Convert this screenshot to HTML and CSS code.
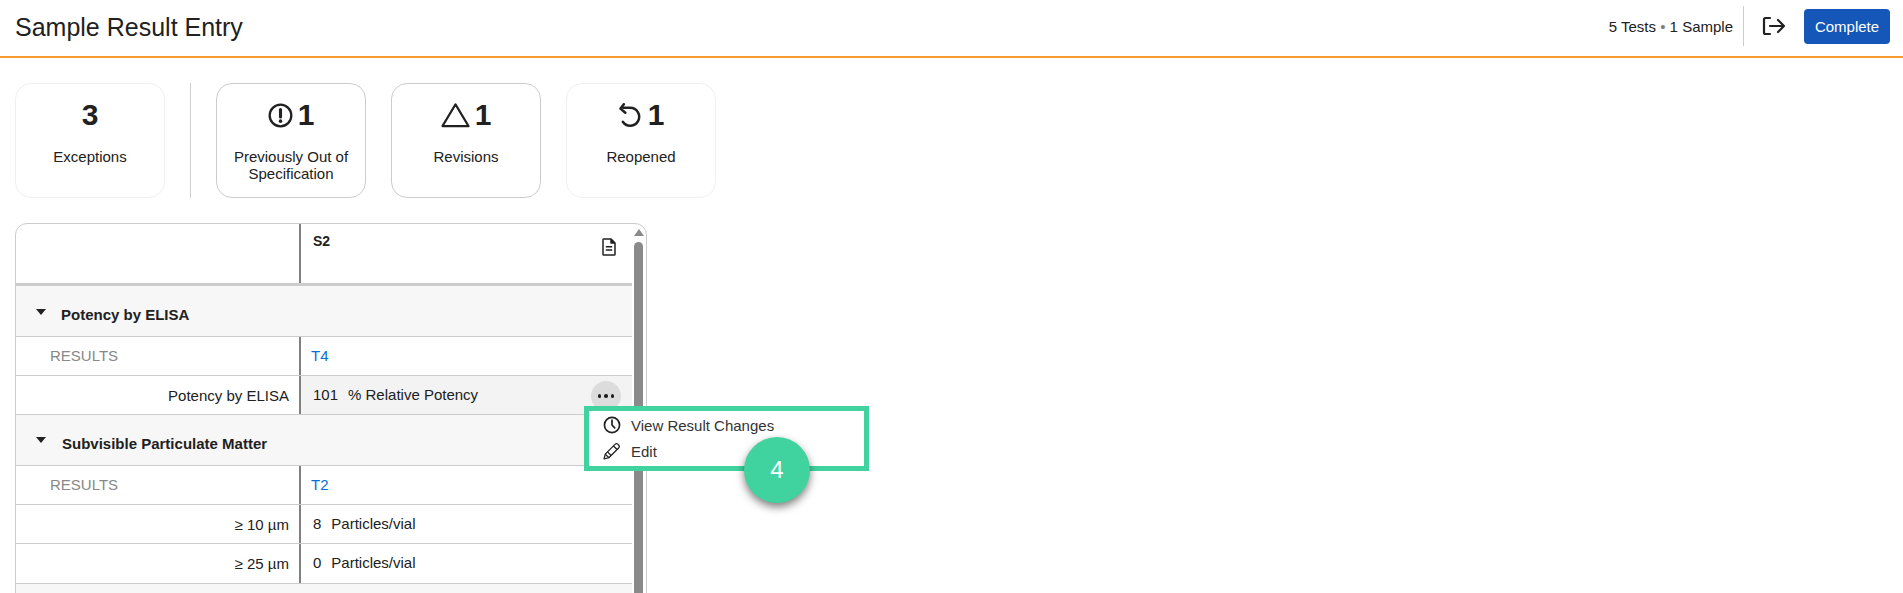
FILE: index.html
```html
<!DOCTYPE html>
<html lang="en">
<head>
<meta charset="utf-8">
<title>Sample Result Entry</title>
<link rel="stylesheet" href="styles.css">
</head>
<body>
<header class="topbar">
  <h1 class="title">Sample Result Entry</h1>
  <div class="top-actions">
    <span class="counts">5 Tests <span class="dot">•</span> 1 Sample</span>
    <span class="top-divider"></span>
    <svg class="exit-icon" viewBox="0 0 24 20" fill="none" stroke="#212121" stroke-width="2.2" stroke-linecap="round" stroke-linejoin="round"><path d="M8 2H3.5A1.5 1.5 0 0 0 2 3.5v13A1.5 1.5 0 0 0 3.5 18H8"/><path d="M8 10h14M16 4l6 6-6 6"/></svg>
    <button class="complete">Complete</button>
  </div>
</header>

<section class="summary">
  <div class="card card-faint">
    <div class="stat"><span>3</span></div>
    <div class="label">Exceptions</div>
  </div>
  <div class="vrule"></div>
  <div class="card">
    <div class="stat">
      <svg class="stat-icon" viewBox="0 0 24 24" fill="none" stroke="#212121" stroke-width="2.2"><circle cx="12" cy="12" r="10.4"/><path d="M12 6.2v7.2" stroke-width="3" stroke-linecap="round"/><circle cx="12" cy="17.4" r="1.7" fill="#212121" stroke="none"/></svg>
      <span>1</span>
    </div>
    <div class="label">Previously Out of Specification</div>
  </div>
  <div class="card">
    <div class="stat">
      <svg class="stat-icon tri" viewBox="0 0 30 26" fill="none" stroke="#212121" stroke-width="2.2" stroke-linejoin="round"><path d="M15 2 28.5 24.5h-27z"/></svg>
      <span>1</span>
    </div>
    <div class="label">Revisions</div>
  </div>
  <div class="card card-faint">
    <div class="stat">
      <svg class="stat-icon" viewBox="0 0 24 24" fill="none" stroke="#212121" stroke-width="2.4" stroke-linecap="round" stroke-linejoin="round"><path d="M5 4.6h6.6a8.6 8.6 0 1 1-7 13.4"/><path d="M5.6 1.2 2.4 5.4l4.6 4"/></svg>
      <span>1</span>
    </div>
    <div class="label">Reopened</div>
  </div>
</section>

<section class="table">
  <div class="rows">
    <div class="row row-head">
      <div class="cell-left"></div>
      <div class="cell-right head-cell">
        <strong>S2</strong>
        <svg class="doc-icon" viewBox="0 0 14 18" fill="none" stroke="#212121" stroke-width="1.5" stroke-linejoin="round"><path d="M1.5 1h7.6L13 5v11.2a.8.8 0 0 1-.8.8H1.8a.8.8 0 0 1-.8-.8V1.5z"/><path d="M9 1v4h4" fill="#212121"/><path d="M3.8 8.8h6.4M3.8 12h6.4"/></svg>
      </div>
    </div>

    <div class="group group-a"><span class="caret"></span><span>Potency by ELISA</span></div>
    <div class="row row-results">
      <div class="cell-left results">RESULTS</div>
      <div class="cell-right link">T4</div>
    </div>
    <div class="row row-value">
      <div class="cell-left name">Potency by ELISA</div>
      <div class="cell-right value shaded"><span class="num">101</span><span>% Relative Potency</span>
        <span class="more"><i></i><i></i><i></i></span>
      </div>
    </div>

    <div class="group group-b"><span class="caret"></span><span>Subvisible Particulate Matter</span></div>
    <div class="row row-results">
      <div class="cell-left results">RESULTS</div>
      <div class="cell-right link">T2</div>
    </div>
    <div class="row row-value">
      <div class="cell-left name">≥ 10 µm</div>
      <div class="cell-right value"><span class="num">8</span><span>Particles/vial</span></div>
    </div>
    <div class="row row-value row-last">
      <div class="cell-left name">≥ 25 µm</div>
      <div class="cell-right value"><span class="num">0</span><span>Particles/vial</span></div>
    </div>
    <div class="group group-rest"></div>
  </div>
  <div class="scrollbar">
    <span class="arrow"></span>
    <span class="thumb"></span>
  </div>
</section>

<div class="menu">
  <div class="menu-item">
    <svg class="menu-icon" viewBox="0 0 20 20" fill="none" stroke="#212121" stroke-width="1.9" stroke-linecap="round" stroke-linejoin="round"><circle cx="10" cy="10" r="8.4"/><path d="M10 4.6V10l3 3.2"/></svg>
    <span>View Result Changes</span>
  </div>
  <div class="menu-item">
    <svg class="menu-icon" viewBox="0 0 20 20" fill="none" stroke="#212121" stroke-width="1.4" stroke-linejoin="round"><path d="M1.2 18.8l1.3-5.3L13.6 2.4a2 2 0 0 1 2.8 0l1.2 1.2a2 2 0 0 1 0 2.8L6.5 17.5z"/><path d="M11.6 4.4l4 4M2.5 13.5l4 4M5 11l4 4"/></svg>
    <span>Edit</span>
  </div>
</div>
<div class="callout">4</div>
</body>
</html>
```
FILE: styles.css
```css
* { box-sizing: border-box; }
html, body { height: 100%; overflow: hidden; }
body {
  margin: 0;
  background: #fff;
  color: #212121;
  font-family: "Liberation Sans", Arial, sans-serif;
  font-size: 15px;
  position: relative;
}
.topbar {
  height: 58px;
  border-bottom: 2px solid #f79a2e;
  display: flex;
  align-items: center;
  justify-content: space-between;
  padding: 0 13px 0 15px;
}
.title { margin: 0 0 2px; font-size: 25px; font-weight: 400; }
.top-actions { display: flex; align-items: center; margin-bottom: 4px; }
.counts { font-size: 15px; }
.dot { color: #808080; }
.top-divider { width: 1px; height: 40px; background: #ccc; margin: 0 18px 0 10px; }
.exit-icon { width: 24px; height: 20px; margin-right: 18px; }
.complete {
  width: 86px; height: 35px;
  background: #1557b8; color: #fff;
  border: 0; border-radius: 4px;
  font: 15px "Liberation Sans", Arial, sans-serif;
  padding: 0;
}
.summary {
  display: flex;
  height: 115px;
  margin: 25px 0 0 15px;
}
.card {
  width: 150px;
  margin-right: 25px;
  border: 1px solid #ccc;
  border-radius: 16px;
  text-align: center;
  padding-top: 14px;
}
.card-faint { border-color: #f0f0f0; }
.vrule { width: 1px; background: #ccc; margin-right: 25px; }
.stat {
  height: 34px;
  display: flex;
  align-items: center;
  justify-content: center;
  gap: 5px;
  font-size: 30px;
  font-weight: 700;
  line-height: 34px;
}
.stat-icon { width: 25px; height: 25px; }
.stat-icon.tri { width: 29px; height: 26px; }
.label {
  margin: 16px auto 0;
  width: 130px;
  font-size: 15px;
  line-height: 17px;
}
.table {
  position: relative;
  display: flex;
  width: 632px;
  height: 480px;
  margin: 25px 0 0 15px;
  border: 1px solid #ccc;
  border-radius: 12px;
  overflow: hidden;
}
.rows { width: 616px; flex: none; }
.row {
  display: grid;
  grid-template-columns: 283px 1fr;
  border-bottom: 1px solid #ccc;
}
.cell-right { border-left: 2px solid #808080; }
.row-head { height: 62px; border-bottom-width: 3px; }
.head-cell {
  display: flex;
  justify-content: space-between;
  align-items: flex-start;
  padding: 9px 16px 0 12px;
  font-size: 14px;
}
.doc-icon { width: 14px; height: 18px; margin-top: 5px; }
.group {
  background: #f7f7f7;
  border-bottom: 1px solid #ccc;
  font-weight: 700;
  display: flex;
  align-items: flex-start;
  padding-left: 20px;
}
.group-a { height: 51px; padding-top: 20px; }
.group-b { height: 51px; padding-top: 20px; }
.group-rest { height: 100px; border-bottom: 0; }
.caret {
  width: 0; height: 0;
  border-left: 5px solid transparent;
  border-right: 5px solid transparent;
  border-top: 6px solid #212121;
  margin: 3px 15px 0 0;
}
.group-b .caret { margin-right: 16px; margin-top: 2px; }
.row-results { height: 39px; }
.results { color: #888; padding: 10px 0 0 34px; }
.link { color: #0a6ed1; padding: 10px 0 0 10px; }
.row-value { height: 39px; }
.row-last { height: 40px; }
.name { text-align: right; padding: 11px 10px 0 0; }
.value { display: flex; padding: 10px 0 0 12px; position: relative; }
.shaded { background: #f3f3f3; }
.num { margin-right: 10px; }
.more {
  position: absolute;
  right: 11px; top: 5px;
  width: 30px; height: 30px;
  border-radius: 50%;
  background: #dcdcdc;
  display: flex; align-items: center; justify-content: center; gap: 3px;
}
.more i { width: 3.5px; height: 3.5px; border-radius: 50%; background: #212121; }
.scrollbar { flex: 1; position: relative; }
.arrow {
  position: absolute; left: 2px; top: 5px;
  width: 0; height: 0;
  border-left: 5px solid transparent;
  border-right: 5px solid transparent;
  border-bottom: 7px solid #8a8a8a;
}
.thumb {
  position: absolute; left: 2px; top: 18px; bottom: 0;
  width: 9px;
  background: #8a8a8a;
  border-radius: 5px 5px 0 0;
}
.menu {
  position: absolute;
  left: 584px; top: 406px;
  width: 285px; height: 65px;
  background: #fff;
  border: 5px solid #40d3a0;
  padding: 1px 0 0 14px;
}
.menu-item {
  display: flex; align-items: center; gap: 10px;
  height: 26px;
  font-size: 15px;
  color: #333;
}
.menu-icon { width: 18px; height: 18px; }
.callout {
  position: absolute;
  left: 744px; top: 437px;
  width: 66px; height: 66px;
  border-radius: 50%;
  background: #40d3a0;
  color: #fff;
  font-size: 24px;
  display: flex; align-items: center; justify-content: center;
  box-shadow: 0 4px 8px rgba(0,0,0,.5);
}
```
